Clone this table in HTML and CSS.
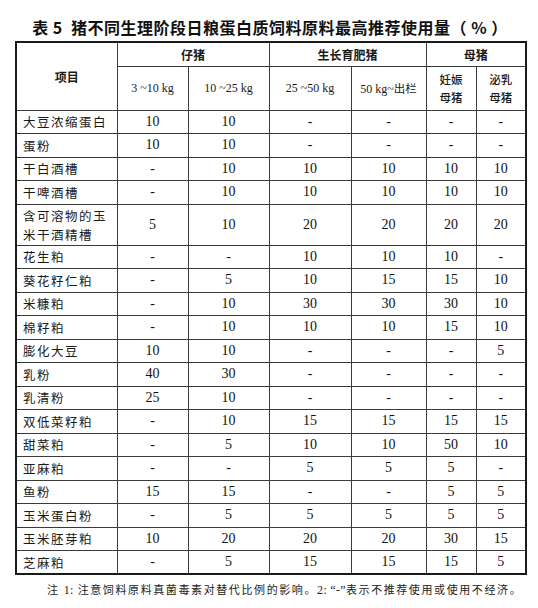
FILE: index.html
```html
<!DOCTYPE html>
<html lang="zh-CN">
<head>
<meta charset="utf-8">
<title>表 5</title>
<link rel="stylesheet" href="styles.css">
</head>
<body>
<div class="page">
  <h1 class="title">表 5&nbsp; 猪不同生理阶段日粮蛋白质饲料原料最高推荐使用量（ % ）</h1>
  <table class="feed">
    <colgroup>
      <col class="c-name"><col class="c1"><col class="c2"><col class="c3"><col class="c4"><col class="c5"><col class="c6">
    </colgroup>
    <thead>
      <tr class="h1row">
        <th rowspan="2" class="hd">项目</th>
        <th colspan="2" class="hd">仔猪</th>
        <th colspan="2" class="hd">生长育肥猪</th>
        <th colspan="2" class="hd">母猪</th>
      </tr>
      <tr class="h2row">
        <th class="sub">3 ~10 kg</th>
        <th class="sub">10 ~25 kg</th>
        <th class="sub">25 ~50 kg</th>
        <th class="sub">50 kg~<span class="cjk">出栏</span></th>
        <th class="sub cjk two">妊娠<br>母猪</th>
        <th class="sub cjk two">泌乳<br>母猪</th>
      </tr>
    </thead>
    <tbody>
      <tr><td class="name">大豆浓缩蛋白</td><td>10</td><td>10</td><td>-</td><td>-</td><td>-</td><td>-</td></tr>
      <tr><td class="name">蛋粉</td><td>10</td><td>10</td><td>-</td><td>-</td><td>-</td><td>-</td></tr>
      <tr><td class="name">干白酒槽</td><td>-</td><td>10</td><td>10</td><td>10</td><td>10</td><td>10</td></tr>
      <tr><td class="name">干啤酒槽</td><td>-</td><td>10</td><td>10</td><td>10</td><td>10</td><td>10</td></tr>
      <tr class="tall"><td class="name">含可溶物的玉<br>米干酒精槽</td><td>5</td><td>10</td><td>20</td><td>20</td><td>20</td><td>20</td></tr>
      <tr><td class="name">花生粕</td><td>-</td><td>-</td><td>10</td><td>10</td><td>10</td><td>-</td></tr>
      <tr><td class="name">葵花籽仁粕</td><td>-</td><td>5</td><td>10</td><td>15</td><td>15</td><td>10</td></tr>
      <tr><td class="name">米糠粕</td><td>-</td><td>10</td><td>30</td><td>30</td><td>30</td><td>10</td></tr>
      <tr><td class="name">棉籽粕</td><td>-</td><td>10</td><td>10</td><td>10</td><td>15</td><td>10</td></tr>
      <tr><td class="name">膨化大豆</td><td>10</td><td>10</td><td>-</td><td>-</td><td>-</td><td>5</td></tr>
      <tr><td class="name">乳粉</td><td>40</td><td>30</td><td>-</td><td>-</td><td>-</td><td>-</td></tr>
      <tr><td class="name">乳清粉</td><td>25</td><td>10</td><td>-</td><td>-</td><td>-</td><td>-</td></tr>
      <tr><td class="name">双低菜籽粕</td><td>-</td><td>10</td><td>15</td><td>15</td><td>15</td><td>15</td></tr>
      <tr><td class="name">甜菜粕</td><td>-</td><td>5</td><td>10</td><td>10</td><td>50</td><td>10</td></tr>
      <tr><td class="name">亚麻粕</td><td>-</td><td>-</td><td>5</td><td>5</td><td>5</td><td>-</td></tr>
      <tr><td class="name">鱼粉</td><td>15</td><td>15</td><td>-</td><td>-</td><td>5</td><td>5</td></tr>
      <tr><td class="name">玉米蛋白粉</td><td>-</td><td>5</td><td>5</td><td>5</td><td>5</td><td>5</td></tr>
      <tr><td class="name">玉米胚芽粕</td><td>10</td><td>20</td><td>20</td><td>20</td><td>30</td><td>15</td></tr>
      <tr><td class="name">芝麻粕</td><td>-</td><td>5</td><td>15</td><td>15</td><td>15</td><td>5</td></tr>
    </tbody>
  </table>
  <p class="note">注 <span class="lat">1:</span> 注意饲料原料真菌毒素对替代比例的影响。<span class="lat">2: “-”</span>表示不推荐使用或使用不经济。</p>
</div>
</body>
</html>
```

FILE: styles.css
```css
html, body {
  margin: 0;
  padding: 0;
  background: #ffffff;
}

.page {
  width: 538px;
  padding: 17px 0 0 15px;
  box-sizing: border-box;
  color: #111;
}

.title {
  margin: 0 0 4px 0;
  width: 510px;
  text-align: center;
  font-family: "Noto Sans CJK SC", "Liberation Sans", sans-serif;
  font-size: 16px;
  line-height: 20px;
  font-weight: 700;
  letter-spacing: 0.5px;
  color: #111;
}

.feed {
  width: 510px;
  table-layout: fixed;
  border-collapse: collapse;
  border: 2px solid #1a1a1a;
}

.c-name { width: 101px; }
.c1 { width: 71px; }
.c2 { width: 81px; }
.c3 { width: 82px; }
.c4 { width: 75px; }
.c5 { width: 50px; }
.c6 { width: 50px; }

.feed th,
.feed td {
  border: 1px solid #3a3a3a;
  padding: 0;
  text-align: center;
  vertical-align: middle;
}

.hd {
  font-family: "Noto Sans CJK SC", "Liberation Sans", sans-serif;
  font-size: 12px;
  font-weight: 700;
  color: #1a1a1a;
}

.h1row { height: 24px; }
.h2row { height: 44px; }

.sub {
  font-family: "Liberation Serif", "Noto Sans CJK SC", serif;
  font-size: 12px;
  font-weight: 400;
  color: #1a1a1a;
}

.cjk {
  font-family: "Noto Sans CJK SC", sans-serif;
  font-size: 11.5px;
}

.two {
  line-height: 18px;
  font-weight: 500;
}

.feed tbody tr { height: 23.5px; }
.feed tbody tr.tall { height: 41px; }

.feed td {
  font-family: "Liberation Serif", serif;
  font-size: 14px;
  line-height: 16px;
  color: #111;
}

.feed td.name {
  text-align: left;
  padding-left: 6px;
  font-family: "Noto Sans CJK SC", sans-serif;
  font-size: 12.5px;
  line-height: 19px;
  letter-spacing: 1.5px;
  font-weight: 400;
  color: #1a1a1a;
}

.note {
  margin: 7px 0 0 32px;
  font-family: "Noto Sans CJK SC", "Liberation Serif", sans-serif;
  font-size: 11px;
  line-height: 14px;
  letter-spacing: 1.6px;
  white-space: nowrap;
  color: #222;
}

.note .lat {
  font-family: "Liberation Serif", serif;
  font-size: 12px;
  letter-spacing: 0.3px;
}
```
